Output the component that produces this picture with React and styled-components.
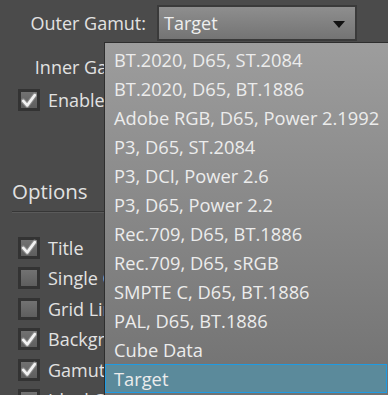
import React from "react";
import styled, { createGlobalStyle } from "styled-components";

const GlobalStyle = createGlobalStyle`
  html, body { margin: 0; padding: 0; background: #4b4b4b; }
  body { font-family: "Open Sans", "Noto Sans", sans-serif; }
`;

const Panel = styled.div`
  position: relative;
  width: 388px;
  height: 395px;
  overflow: hidden;
  background: #4b4b4b;
  color: #e2e2e2;
  font-size: 18px;
  padding: 5px 0 0 0;
  box-sizing: border-box;
`;

const FieldRow = styled.div`
  display: grid;
  grid-template-columns: 146px 200px;
  column-gap: 11px;
  align-items: center;
  height: 36px;
  margin-bottom: ${(p) => p.gap || 0}px;
`;

const FieldLabel = styled.span`
  text-align: right;
  white-space: nowrap;
`;

const Combo = styled.div`
  display: flex;
  align-items: center;
  justify-content: space-between;
  height: 36px;
  box-sizing: border-box;
  border: 2px solid #3a3a3a;
  background: linear-gradient(#8e8e8e, #747474);
  padding: 0 10px 0 5px;
  color: #eeeeee;
  overflow: hidden;
  white-space: nowrap;
`;

const Arrow = styled.span`
  width: 0;
  height: 0;
  border-left: 6px solid transparent;
  border-right: 6px solid transparent;
  border-top: 7px solid #111;
  margin-top: 2px;
`;

const CheckRow = styled.div`
  display: flex;
  align-items: center;
  gap: 8px;
  height: 30.5px;
  padding-left: 18px;
  white-space: nowrap;
`;

const Box = styled.span`
  width: 22px;
  height: 22px;
  box-sizing: border-box;
  border: 3px solid #333;
  background: linear-gradient(#727272, #5e5e5e);
  display: flex;
  align-items: center;
  justify-content: center;
  flex: none;
`;

const Heading = styled.div`
  margin: 59px 0 0 12px;
  font-size: 20.5px;
  height: 32px;
  line-height: 32px;
`;

const Rule = styled.div`
  margin: 4px 0 20px 12px;
  height: 1px;
  background: #363636;
  border-bottom: 1px solid #5a5a5a;
`;

const List = styled.div`
  position: absolute;
  left: 104px;
  right: 0;
  top: 42px;
  bottom: -40px;
  border: 1px solid #2e2e2e;
  border-right: none;
  padding-top: 2px;
  background: linear-gradient(#9d9d9d, #727272 88%);
`;

const Item = styled.div`
  height: 29px;
  box-sizing: border-box;
  display: flex;
  align-items: center;
  padding-left: 8px;
  margin-right: 1px;
  color: #ececec;
  font-size: 18.3px;
  white-space: nowrap;
  border: 1px solid ${(p) => (p.selected ? "#1f9be3" : "transparent")};
  background: ${(p) => (p.selected ? "#5b8a9b" : "transparent")};
`;

const Check = () => (
  <svg width="18" height="17" viewBox="0 0 18 17">
    <path
      d="M2.5 9 L7 14 L15.5 2.5"
      fill="none"
      stroke="#8a8a8a"
      strokeWidth="5.5"
      strokeLinecap="round"
      strokeLinejoin="round"
    />
    <path
      d="M2.5 9 L7 14 L15.5 2.5"
      fill="none"
      stroke="#f2f2f2"
      strokeWidth="3"
      strokeLinecap="round"
      strokeLinejoin="round"
    />
  </svg>
);

const CheckBox = ({ checked, label }) => (
  <CheckRow>
    <Box>{checked && <Check />}</Box>
    <span>{label}</span>
  </CheckRow>
);

const options = [
  { label: "Title", checked: true },
  { label: "Single Gamut", checked: false },
  { label: "Grid Lines", checked: false },
  { label: "Background", checked: true },
  { label: "Gamut Labels", checked: true },
  { label: "Ideal Curve", checked: false },
];

const gamuts = [
  "BT.2020, D65, ST.2084",
  "BT.2020, D65, BT.1886",
  "Adobe RGB, D65, Power 2.1992",
  "P3, D65, ST.2084",
  "P3, DCI, Power 2.6",
  "P3, D65, Power 2.2",
  "Rec.709, D65, BT.1886",
  "Rec.709, D65, sRGB",
  "SMPTE C, D65, BT.1886",
  "PAL, D65, BT.1886",
  "Cube Data",
  "Target",
];

export default function App() {
  return (
    <Panel>
      <GlobalStyle />
      <FieldRow gap={8}>
        <FieldLabel>Outer Gamut:</FieldLabel>
        <Combo>
          <span>Target</span>
          <Arrow />
        </Combo>
      </FieldRow>
      <FieldRow gap={0}>
        <FieldLabel>Inner Gamut:</FieldLabel>
        <Combo>
          <span>Rec.709, D65</span>
          <Arrow />
        </Combo>
      </FieldRow>
      <CheckBox checked label="Enable Inner Gamut" />
      <Heading>Options</Heading>
      <Rule />
      {options.map((o) => (
        <CheckBox key={o.label} checked={o.checked} label={o.label} />
      ))}
      <List>
        {gamuts.map((g) => (
          <Item key={g} selected={g === "Target"}>
            {g}
          </Item>
        ))}
      </List>
    </Panel>
  );
}
